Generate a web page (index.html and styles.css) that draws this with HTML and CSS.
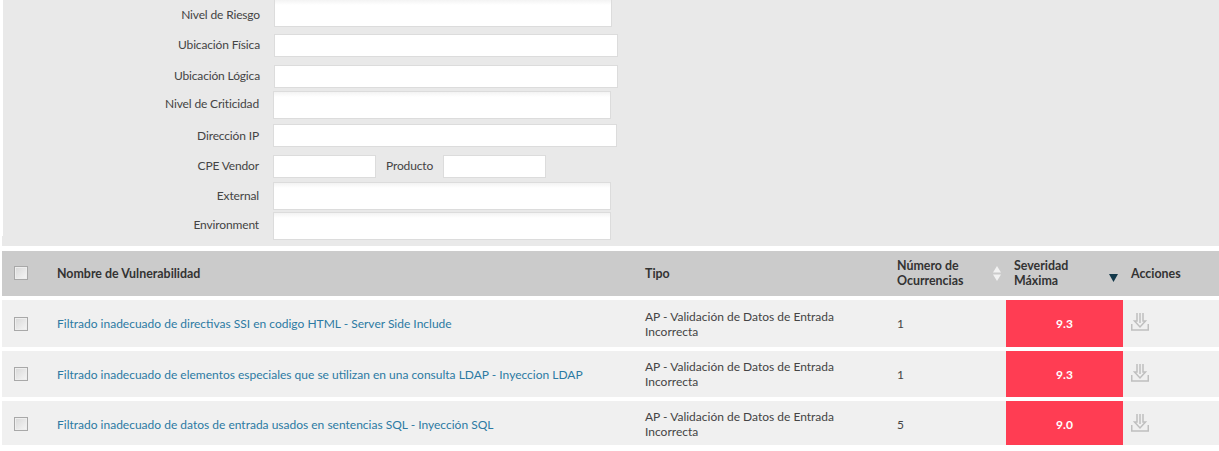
FILE: index.html
```html
<!DOCTYPE html>
<html lang="es">
<head>
<meta charset="utf-8">
<title>Vulnerabilidades</title>
<link rel="stylesheet" href="styles.css">
</head>
<body>
<form class="filters">
  <div class="field f1 shift"><label class="lbl">Nivel de Riesgo</label><input class="inp tall"></div>
  <div class="field f2 shift"><label class="lbl">Ubicación Física</label><input class="inp wide"></div>
  <div class="field f3 shift"><label class="lbl">Ubicación Lógica</label><input class="inp wide"></div>
  <div class="field f4"><label class="lbl">Nivel de Criticidad</label><input class="inp tall"></div>
  <div class="field f5"><label class="lbl">Dirección IP</label><input class="inp wide"></div>
  <div class="field f6"><label class="lbl">CPE Vendor</label><input class="inp small"><label class="lbl2">Producto</label><input class="inp small"></div>
  <div class="field f7"><label class="lbl">External</label><input class="inp tall"></div>
  <div class="field f8"><label class="lbl">Environment</label><input class="inp tall"></div>
</form>
<div class="table">
  <div class="row head">
    <div class="cell chk"><input type="checkbox" class="box"></div>
    <div class="cell">Nombre de Vulnerabilidad</div>
    <div class="cell">Tipo</div>
    <div class="cell sortcell"><span>Número de<br>Ocurrencias</span>
      <svg class="sort" width="8" height="15" viewBox="0 0 8 15"><path d="M4 0 8 6.500H0zM4 15 0 8.500h8z" fill="#f2f2f2"/></svg></div>
    <div class="cell sortcell sevhead"><span>Severidad<br>Máxima</span>
      <svg class="sortdown" width="9" height="8" viewBox="0 0 9 8"><path d="M0 0h9L4.500 8z" fill="#12384a"/></svg></div>
    <div class="cell acthead">Acciones</div>
  </div>
  <div class="row r1">
    <div class="cell chk"><input type="checkbox" class="box"></div>
    <div class="cell"><a class="link" href="#">Filtrado inadecuado de directivas SSI en codigo HTML - Server Side Include</a></div>
    <div class="cell">AP - Validación de Datos de Entrada<br>Incorrecta</div>
    <div class="cell">1</div>
    <div class="cell sev">9.3</div>
    <div class="cell act"><svg class="dl" width="18" height="18" viewBox="0 0 18 18"><path d="M.75 11v6h16.500v-6M6 0v8H3.500L9 14l5.500-6H12V0M9 0v10" fill="none" stroke="#bfbfbf" stroke-width="1.500"/></svg></div>
  </div>
  <div class="row r2">
    <div class="cell chk"><input type="checkbox" class="box"></div>
    <div class="cell"><a class="link" href="#">Filtrado inadecuado de elementos especiales que se utilizan en una consulta LDAP - Inyeccion LDAP</a></div>
    <div class="cell">AP - Validación de Datos de Entrada<br>Incorrecta</div>
    <div class="cell">1</div>
    <div class="cell sev">9.3</div>
    <div class="cell act"><svg class="dl" width="18" height="18" viewBox="0 0 18 18"><path d="M.75 11v6h16.500v-6M6 0v8H3.500L9 14l5.500-6H12V0M9 0v10" fill="none" stroke="#bfbfbf" stroke-width="1.500"/></svg></div>
  </div>
  <div class="row r3">
    <div class="cell chk"><input type="checkbox" class="box"></div>
    <div class="cell"><a class="link" href="#">Filtrado inadecuado de datos de entrada usados en sentencias SQL - Inyección SQL</a></div>
    <div class="cell">AP - Validación de Datos de Entrada<br>Incorrecta</div>
    <div class="cell">5</div>
    <div class="cell sev">9.0</div>
    <div class="cell act"><svg class="dl" width="18" height="18" viewBox="0 0 18 18"><path d="M.75 11v6h16.500v-6M6 0v8H3.500L9 14l5.500-6H12V0M9 0v10" fill="none" stroke="#bfbfbf" stroke-width="1.500"/></svg></div>
  </div>
</div>
</body>
</html>
```

FILE: styles.css
```css
* { box-sizing: border-box; }
html, body { margin: 0; padding: 0; background: #fff; }
body { font-family: Lato, "Open Sans", sans-serif; font-size: 12px; color: #444; height: 451px; overflow: hidden; }

.filters { margin-left: 2px; height: 246px; padding-left: 1px; overflow: hidden; background: linear-gradient(#fff, #fff) 0 0 / 1px 236px no-repeat, #e9e9e9; }
.field { display: flex; align-items: center; }
.lbl { width: 256px; text-align: right; margin: 0 14px 2px 0; line-height: 14px; letter-spacing: -0.15px; }
.shift .lbl { width: 257px; }
.lbl2 { margin: 0 9px 2px 10px; width: 48px; letter-spacing: -0.15px; line-height: 14px; }
.inp { height: 23px; background: #fff; border: 1px solid #dcdcdc; padding: 0; display: block; }
.tall { width: 338px; height: 28px; background: linear-gradient(#f3f3f3, #fff 5px); }
.wide { width: 344px; }
.small { width: 103px; }
.f1 { margin-top: -1px; }
.f1 .lbl { margin: 4px 14px 0 0; }
.f2 { margin-top: 7px; }
.f3 { margin-top: 8px; }
.f4 { margin-top: 3px; }
.f5 { margin-top: 5px; }
.f5 .lbl { margin-bottom: 0; }
.f6 { margin-top: 8px; }
.f7 { margin-top: 4px; }
.f7 .lbl { margin-bottom: 0; }
.f8 { margin-top: 2px; }

.table { margin: 5px 0 0 2px; display: grid; row-gap: 4px; }
.row { display: grid; grid-template-columns: 55px 588px 252px 109px 117px 96px; grid-template-rows: 46px; background: #f0f0f0; align-items: center; height: 46px; overflow: hidden; }
.head { background: #cbcbcb; height: 45px; grid-template-rows: 44px; font-weight: 700; font-size: 12.4px; color: #333; }
.r1 { height: 47px; grid-template-rows: 47px; }
.r3 { height: 44px; }
.cell { line-height: 15px; }
.chk { padding-left: 12px; display: flex; }
.box { appearance: none; -webkit-appearance: none; margin: 0; width: 14px; height: 14px; border: 1px solid #a8a8a8; background: linear-gradient(135deg, #d8d8d8, #f6f6f6); box-shadow: inset 0 0 0 1px #eee; }
.link { color: #2c7aa3; text-decoration: none; }
.sortcell { display: flex; align-items: center; justify-content: space-between; padding-right: 5px; }
.sevhead { padding: 0 5px 0 8px; }
.sort { display: block; }
.sortdown { display: block; margin-top: 9px; }
.acthead { padding-left: 8px; }
.sev { background: #ff3d53; color: #fff; font-weight: 700; align-self: stretch; display: flex; align-items: center; justify-content: center; }
.act { padding: 13px 0 0 8px; align-self: start; }
.dl { display: block; }
```
